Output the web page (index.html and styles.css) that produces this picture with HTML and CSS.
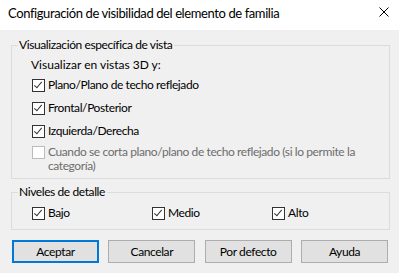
FILE: index.html
```html
<!DOCTYPE html>
<html lang="es">
<head>
    <meta charset="UTF-8">
    <title>Configuración de visibilidad del elemento de familia</title>
    <link rel="stylesheet" href="styles.css">
</head>
<body>
<div class="dialog">
    <div class="titlebar">
        <span class="title">Configuración de visibilidad del elemento de familia</span>
        <svg class="close" width="10" height="10" viewBox="0 0 10 10">
            <path d="M0.5 0.5 L9.5 9.5 M9.5 0.5 L0.5 9.5" stroke="#000" stroke-width="1"/>
        </svg>
    </div>
    <div class="content">
        <fieldset class="group group-view">
            <legend>Visualización específica de vista</legend>
            <div class="sub">Visualizar en vistas 3D y:</div>
            <div class="rows">
                <label class="check"><span class="box on"></span>Plano/Plano de techo reflejado</label>
                <label class="check"><span class="box on"></span>Frontal/Posterior</label>
                <label class="check"><span class="box on"></span>Izquierda/Derecha</label>
                <label class="check disabled"><span class="box"></span>Cuando se corta plano/plano de techo reflejado (si lo permite la categoría)</label>
            </div>
        </fieldset>
        <fieldset class="group group-detail">
            <legend>Niveles de detalle</legend>
            <div class="levels">
                <label class="check"><span class="box on"></span>Bajo</label>
                <label class="check"><span class="box on"></span>Medio</label>
                <label class="check"><span class="box on"></span>Alto</label>
            </div>
        </fieldset>
        <div class="buttons">
            <button class="btn default">Aceptar</button>
            <button class="btn">Cancelar</button>
            <button class="btn">Por defecto</button>
            <button class="btn">Ayuda</button>
        </div>
    </div>
</div>
</body>
</html>
```

FILE: styles.css
```css
body {
    margin: 0;
    width: 399px;
    height: 273px;
    overflow: hidden;
    background-color: #f0f0f0;
    font-family: Lato, 'Liberation Sans', sans-serif;
    font-size: 12px;
    letter-spacing: -0.4px;
    color: #000;
}
.titlebar {
    height: 30px;
    background-color: #fff;
    display: flex;
    align-items: center;
    justify-content: space-between;
    padding: 0 10px 0 8px;
}
.title {
    font-size: 13px;
    letter-spacing: -0.4px;
    margin-top: -4px;
}
.close {
    margin-top: -6px;
}
.content {
    padding: 8px 9px 0 11px;
}
.group {
    margin: 0;
    padding: 0;
    border: 1px solid #dcdcdc;
}
.group legend {
    margin-left: 6px;
    padding: 0 2px 0 1px;
    line-height: 14px;
}
.group-view {
    padding-bottom: 5px;
}
.sub {
    margin: 6px 0 0 19px;
    line-height: 14px;
    letter-spacing: 0;
}
.rows {
    margin-top: 6px;
    display: flex;
    flex-direction: column;
    gap: 9px;
}
.check {
    display: flex;
    align-items: center;
    line-height: 14px;
    padding-left: 20px;
}
.check.disabled {
    align-items: flex-start;
    color: #6d6d6d;
    padding-right: 20px;
    margin-top: -2px;
}
.box {
    flex: none;
    width: 11px;
    height: 11px;
    border: 1px solid #333;
    background-color: #fff;
    margin-right: 3px;
    position: relative;
}
.disabled .box {
    border-color: #bcbcbc;
    margin-top: 1px;
}
.box.on::after {
    content: '';
    position: absolute;
    left: 3px;
    top: 0px;
    width: 3px;
    height: 7px;
    border-right: 1px solid #333;
    border-bottom: 1px solid #333;
    transform: rotate(40deg);
}
.group-detail {
    margin-top: 6px;
    padding-bottom: 9px;
}
.levels {
    margin-top: 7px;
    display: flex;
}
.levels .check {
    width: 100px;
}
.buttons {
    margin: 10px 2px 0 1px;
    display: flex;
    justify-content: space-between;
}
.btn {
    width: 87px;
    height: 23px;
    padding: 0;
    border: 1px solid #adadad;
    background-color: #e1e1e1;
    font-family: inherit;
    font-size: 12px;
    letter-spacing: inherit;
    color: #000;
}
.btn.default {
    border: 2px solid #0078d7;
}
```
